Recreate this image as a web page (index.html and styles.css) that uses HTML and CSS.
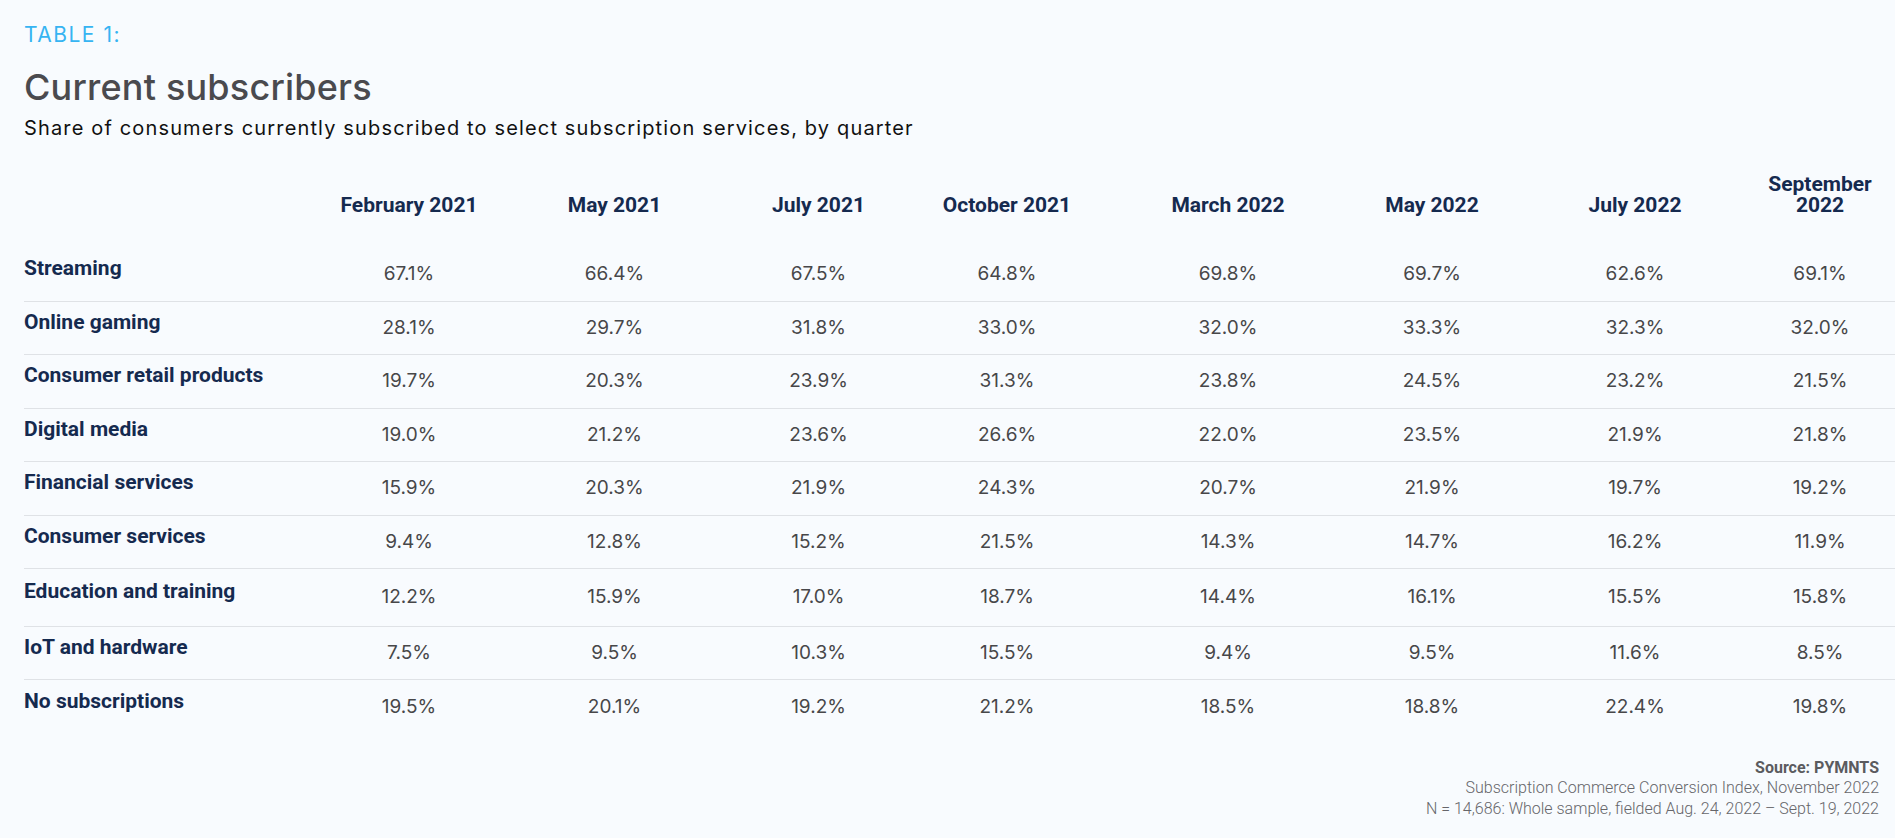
FILE: index.html
```html
<!DOCTYPE html>
<html lang="en">
<head>
<meta charset="utf-8">
<title>Current subscribers</title>
<link rel="stylesheet" href="styles.css">
</head>
<body>
<div class="page">
  <div class="eyebrow">TABLE 1:</div>
  <h1 class="title">Current subscribers</h1>
  <p class="subtitle">Share of consumers currently subscribed to select subscription services, by quarter</p>

  <table class="data">
    <colgroup>
      <col class="c-label">
      <col class="c1"><col class="c2"><col class="c3"><col class="c4">
      <col class="c5"><col class="c6"><col class="c7"><col class="c8">
    </colgroup>
    <thead>
      <tr>
        <th class="corner"></th>
        <th>February 2021</th>
        <th>May 2021</th>
        <th>July 2021</th>
        <th>October 2021</th>
        <th>March 2022</th>
        <th>May 2022</th>
        <th>July 2022</th>
        <th>September 2022</th>
      </tr>
    </thead>
    <tbody>
      <tr><th class="label">Streaming</th><td>67.1%</td><td>66.4%</td><td>67.5%</td><td>64.8%</td><td>69.8%</td><td>69.7%</td><td>62.6%</td><td>69.1%</td></tr>
      <tr><th class="label">Online gaming</th><td>28.1%</td><td>29.7%</td><td>31.8%</td><td>33.0%</td><td>32.0%</td><td>33.3%</td><td>32.3%</td><td>32.0%</td></tr>
      <tr><th class="label">Consumer retail products</th><td>19.7%</td><td>20.3%</td><td>23.9%</td><td>31.3%</td><td>23.8%</td><td>24.5%</td><td>23.2%</td><td>21.5%</td></tr>
      <tr><th class="label">Digital media</th><td>19.0%</td><td>21.2%</td><td>23.6%</td><td>26.6%</td><td>22.0%</td><td>23.5%</td><td>21.9%</td><td>21.8%</td></tr>
      <tr><th class="label">Financial services</th><td>15.9%</td><td>20.3%</td><td>21.9%</td><td>24.3%</td><td>20.7%</td><td>21.9%</td><td>19.7%</td><td>19.2%</td></tr>
      <tr><th class="label">Consumer services</th><td>9.4%</td><td>12.8%</td><td>15.2%</td><td>21.5%</td><td>14.3%</td><td>14.7%</td><td>16.2%</td><td>11.9%</td></tr>
      <tr class="tall"><th class="label">Education and training</th><td>12.2%</td><td>15.9%</td><td>17.0%</td><td>18.7%</td><td>14.4%</td><td>16.1%</td><td>15.5%</td><td>15.8%</td></tr>
      <tr><th class="label">IoT and hardware</th><td>7.5%</td><td>9.5%</td><td>10.3%</td><td>15.5%</td><td>9.4%</td><td>9.5%</td><td>11.6%</td><td>8.5%</td></tr>
      <tr class="last"><th class="label">No subscriptions</th><td>19.5%</td><td>20.1%</td><td>19.2%</td><td>21.2%</td><td>18.5%</td><td>18.8%</td><td>22.4%</td><td>19.8%</td></tr>
    </tbody>
  </table>

  <div class="source">
    <div class="source-head">Source: PYMNTS</div>
    <div>Subscription Commerce Conversion Index, November 2022</div>
    <div>N = 14,686: Whole sample, fielded Aug. 24, 2022 – Sept. 19, 2022</div>
  </div>
</div>
</body>
</html>
```

FILE: styles.css
```css
html, body {
  margin: 0;
  padding: 0;
  background: #f8fbfe;
}

.page {
  padding: 22px 0 0 24px;
  font-family: Inter, "Liberation Sans", sans-serif;
}

.eyebrow {
  font-family: Inter, "Liberation Sans", sans-serif;
  font-size: 21px;
  line-height: 25px;
  letter-spacing: 1.5px;
  color: #36b4f2;
  font-weight: 400;
}

.title {
  margin: 18px 0 0 0;
  font-family: Inter, "Liberation Sans", sans-serif;
  font-size: 36px;
  line-height: 44px;
  letter-spacing: 0.2px;
  font-weight: 500;
  color: #4a4a4e;
}

.subtitle {
  margin: 7px 0 0 0;
  font-family: Inter, "Liberation Sans", sans-serif;
  font-size: 20px;
  line-height: 24px;
  letter-spacing: 1.15px;
  font-weight: 400;
  color: #111111;
}

.data {
  margin-top: 34px;
  width: 1871px;
  table-layout: fixed;
  border-collapse: separate;
  border-spacing: 0;
}

.c-label { width: 305px; }
.c1 { width: 160px; }
.c2 { width: 251px; }
.c3 { width: 157px; }
.c4 { width: 220px; }
.c5 { width: 222px; }
.c6 { width: 186px; }
.c7 { width: 220px; }
.c8 { width: 150px; }

.data thead th {
  font-family: Roboto, "Liberation Sans", sans-serif;
  font-weight: 700;
  font-size: 21px;
  line-height: 21px;
  color: #152a4f;
  text-align: center;
  vertical-align: bottom;
  padding: 0 0 32px 0;
}

.data tbody tr {
  height: 53.5px;
}

.data tbody tr.tall {
  height: 57.5px;
}

.data tbody th,
.data tbody td {
  box-sizing: border-box;
  border-bottom: 1px solid #dfe2e6;
  padding: 0;
  vertical-align: middle;
}

.data tbody tr.last th,
.data tbody tr.last td {
  border-bottom: none;
}

.data tbody th.label {
  font-family: Roboto, "Liberation Sans", sans-serif;
  font-weight: 700;
  font-size: 21px;
  line-height: 24px;
  color: #152a4f;
  text-align: left;
  padding-bottom: 12px;
}

.data tbody td {
  font-family: Inter, "Liberation Sans", sans-serif;
  font-size: 19px;
  line-height: 24px;
  color: #474749;
  text-align: center;
}

.source {
  margin-top: 24px;
  padding-right: 16px;
  text-align: right;
  font-family: Roboto, "Liberation Sans", sans-serif;
  font-size: 16px;
  line-height: 20.5px;
  font-weight: 300;
  color: #66666a;
}

.source-head {
  font-weight: 700;
  color: #5b5b5f;
}
```
